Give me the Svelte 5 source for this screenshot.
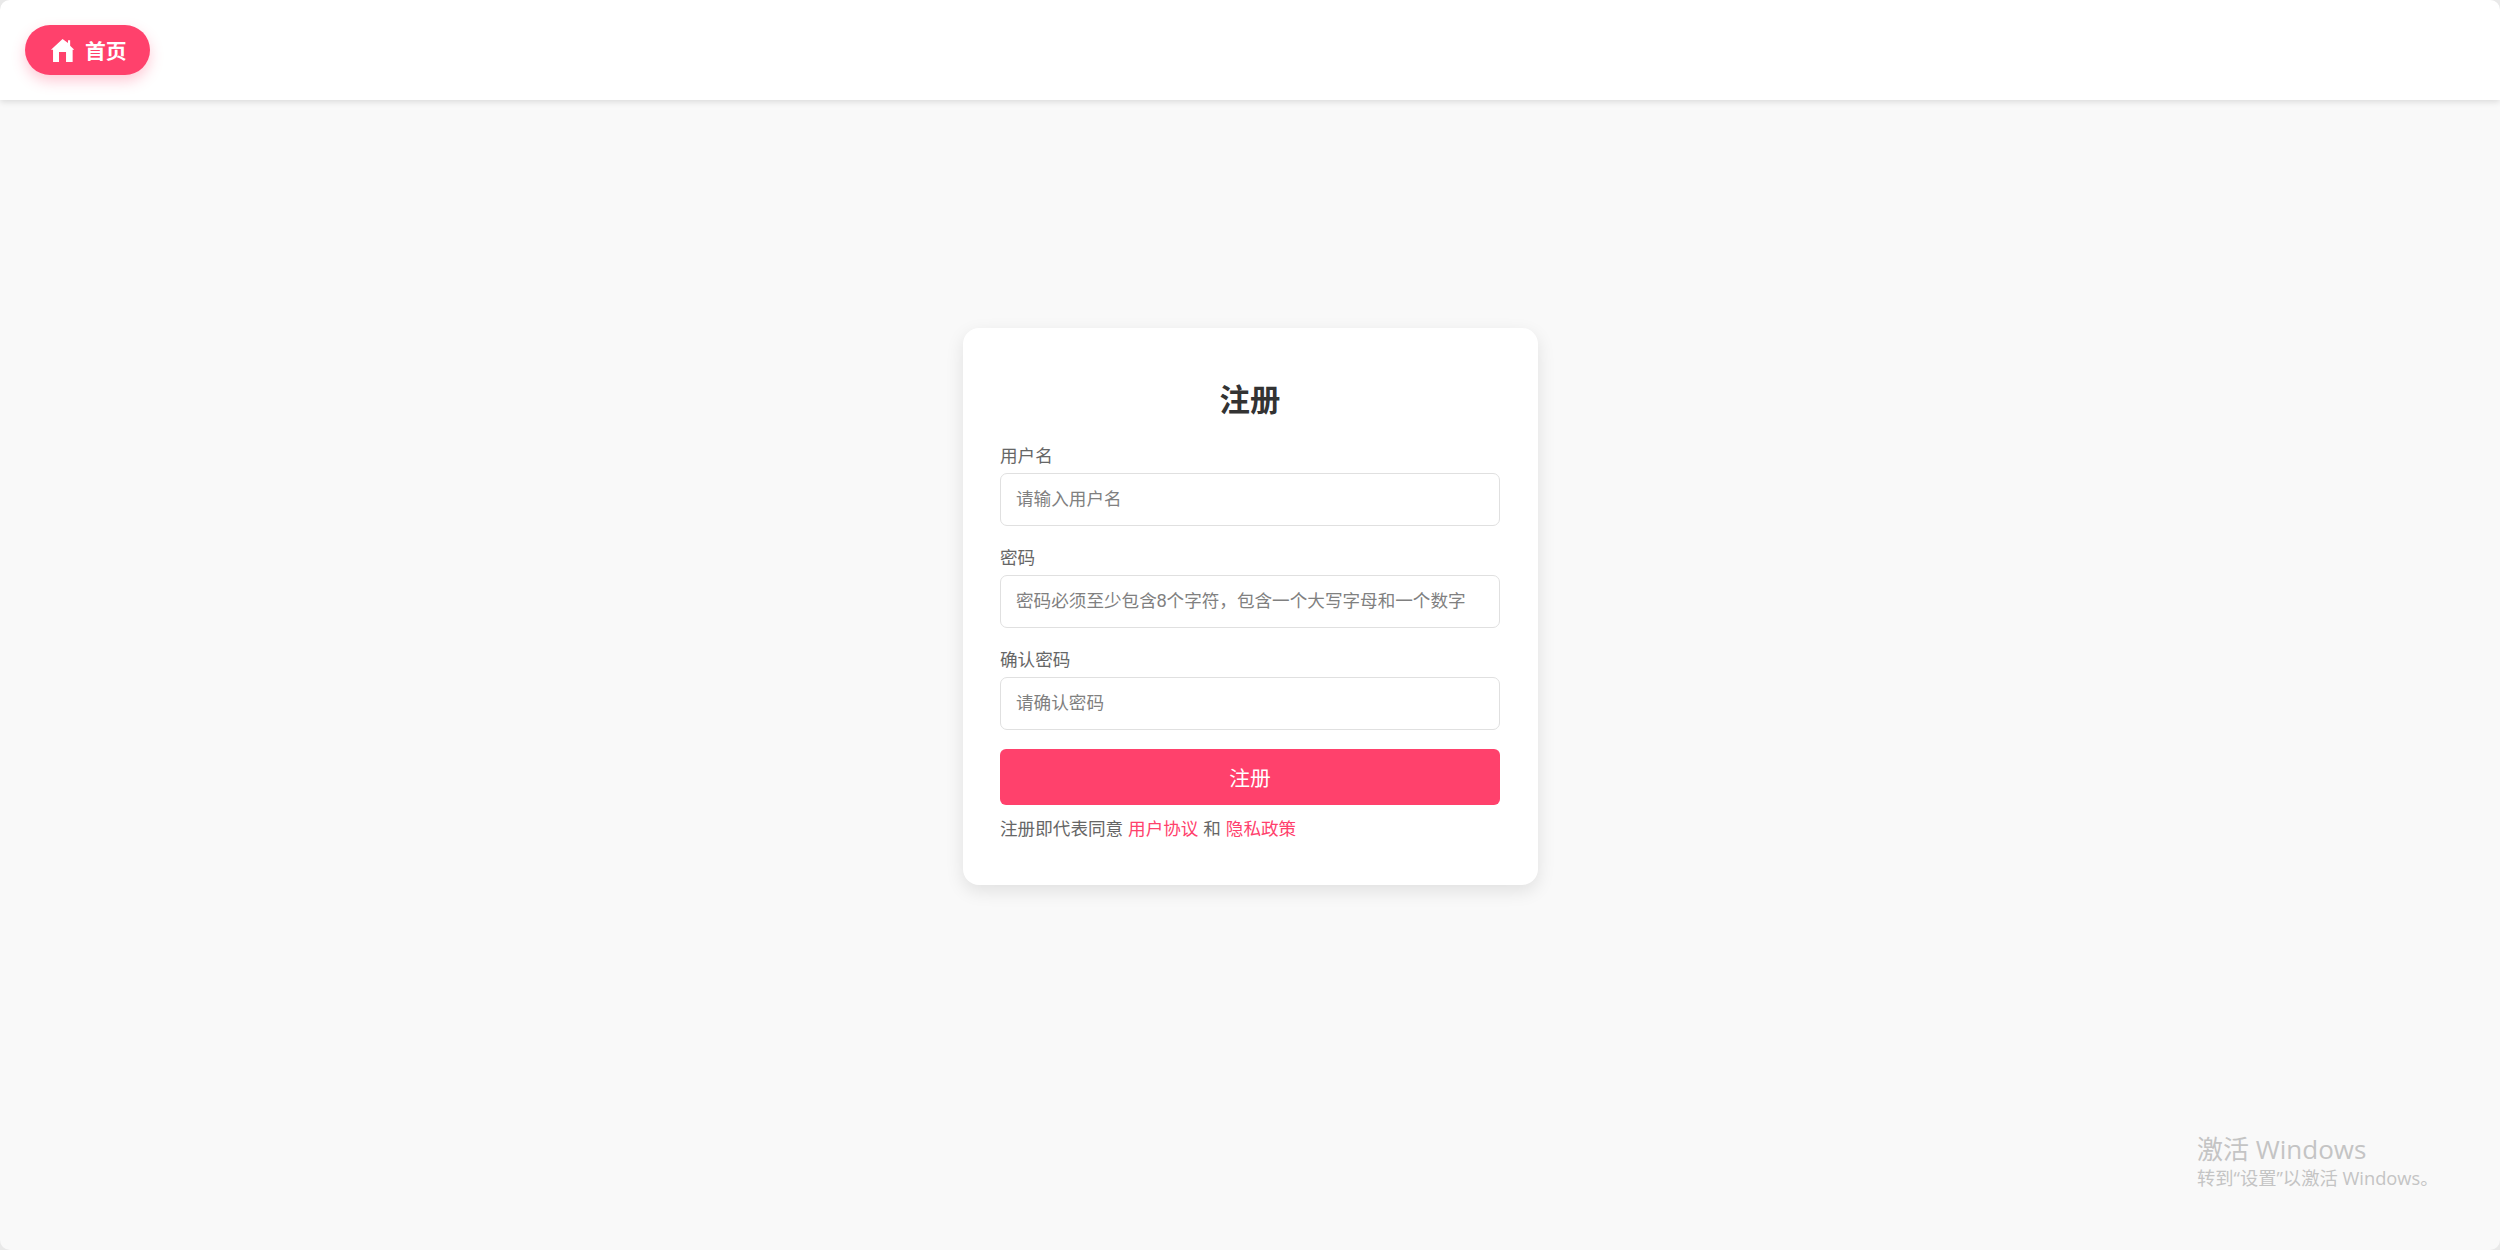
<script>
  let username = $state("");
  let password = $state("");
  let confirmPassword = $state("");
</script>

<div class="page">
  <header class="topbar">
    <a class="home" href="#top">
      <svg viewBox="0 0 24 24" width="26" height="26" aria-hidden="true">
        <path d="M11.600 1.800.9 11.800h1.900V23h5.500v-9.200h6.500V23h6.100V11.800h1.500l-3.800-3.800V3h-2v2.600z" fill="currentColor" />
      </svg>
      <span>首页</span>
    </a>
  </header>

  <main class="content">
    <form class="card" onsubmit={(e) => e.preventDefault()}>
      <h2>注册</h2>
      <label class="field">
        <span>用户名</span>
        <input type="text" placeholder="请输入用户名" bind:value={username} />
      </label>
      <label class="field">
        <span>密码</span>
        <input type="password" placeholder="密码必须至少包含8个字符，包含一个大写字母和一个数字" bind:value={password} />
      </label>
      <label class="field">
        <span>确认密码</span>
        <input type="password" placeholder="请确认密码" bind:value={confirmPassword} />
      </label>
      <button type="submit">注册</button>
      <p class="terms">注册即代表同意 <a href="#top">用户协议</a> 和 <a href="#top">隐私政策</a></p>
    </form>
  </main>

  <div class="activate">
    <div class="big">激活 Windows</div>
    <div class="small">转到“设置”以激活 Windows。</div>
  </div>
</div>

<style>
  :global(body) {
    background: #e9e9e9;
  }

  .page {
    position: relative;
    height: 1250px;
    display: flex;
    flex-direction: column;
    background: #f9f9f9;
    border-radius: 10px;
    overflow: hidden;
    font-family: "Liberation Sans", "Noto Sans CJK SC", sans-serif;
  }

  .topbar {
    height: 100px;
    box-sizing: border-box;
    padding: 25px;
    background: #fff;
    box-shadow: 0 2px 6px rgba(0, 0, 0, 0.12);
    display: flex;
    align-items: flex-start;
  }

  .home {
    height: 50px;
    padding: 0 23px 0 25px;
    display: flex;
    align-items: center;
    gap: 9px;
    border-radius: 25px;
    background: #ff416c;
    color: #fff;
    font-size: 20.8px;
    font-weight: 700;
    text-decoration: none;
    box-shadow: 0 6px 14px rgba(255, 65, 108, 0.28);
  }

  .content {
    flex: 1;
    display: flex;
    justify-content: center;
    padding-top: 228px;
  }

  .card {
    width: 575px;
    height: 557px;
    box-sizing: border-box;
    padding: 50px 37.5px 0;
    background: #fff;
    border-radius: 16px;
    box-shadow: 0 6px 18px rgba(0, 0, 0, 0.1);
  }

  h2 {
    margin: 0 0 21px;
    text-align: center;
    font-size: 30.4px;
    line-height: 44px;
    color: #333;
  }

  .field {
    display: block;
    margin-bottom: 19px;
  }

  .field span {
    display: block;
    font-size: 17.6px;
    line-height: 26px;
    color: #666;
    margin-bottom: 4px;
  }

  input {
    display: block;
    width: 100%;
    height: 53px;
    box-sizing: border-box;
    padding: 0 15px;
    border: 1px solid #e0e0e0;
    border-radius: 7px;
    font-family: inherit;
    font-size: 17.6px;
    outline: none;
  }

  input::placeholder {
    color: #808080;
  }

  button {
    display: block;
    width: 100%;
    height: 56px;
    border: 0;
    border-radius: 6px;
    background: #ff416c;
    color: #fff;
    font-family: inherit;
    font-size: 20.8px;
  }

  .terms {
    margin: 11px 0 0;
    font-size: 17.6px;
    line-height: 26px;
    color: #666;
  }

  .terms a {
    color: #ff416c;
    text-decoration: none;
  }

  .activate {
    position: absolute;
    left: 2197px;
    top: 1133px;
    color: #c4c4c4;
    font-family: "Open Sans", "Noto Sans CJK SC", sans-serif;
  }

  .big {
    font-size: 26px;
    line-height: 33px;
  }

  .small {
    font-size: 18.3px;
    line-height: 24px;
  }
</style>
